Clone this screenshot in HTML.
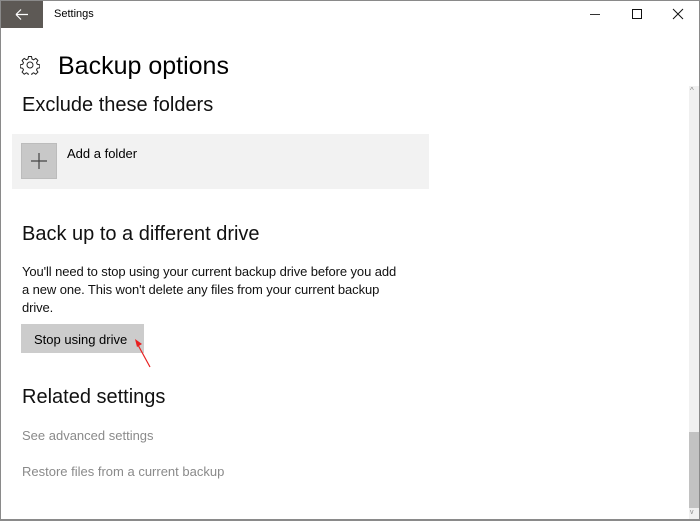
<!DOCTYPE html>
<html><head><meta charset="utf-8"><style>
*{margin:0;padding:0;box-sizing:border-box}
body{width:700px;height:521px;background:#fff;font-family:"Liberation Sans",sans-serif;color:#000;position:relative;overflow:hidden}
.frame{position:absolute;left:0;top:0;width:700px;height:521px;border:1px solid #8a8a8a;border-bottom:2px solid #8a8a8a}
.abs{position:absolute;white-space:nowrap}
.back{position:absolute;left:1px;top:1px;width:42px;height:27px;background:#5d5955}
.h1{font-size:25px;left:58px;top:52px}
.h2{font-size:20px;color:#111}
.body{font-size:13px;letter-spacing:-0.1px;line-height:18px;color:#111}
.link{font-size:13px;color:#8a8a8a}
</style></head><body>
<div class="back"><svg width="42" height="27"><path d="M15 13.5h12M15 13.5l5-5M15 13.5l5 5" stroke="#fff" stroke-width="1.2" fill="none"/></svg></div>
<div class="abs" style="left:54px;top:8px;font-size:11px">Settings</div>
<svg class="abs" style="left:590px;top:0" width="110" height="28">
<path d="M0 14.5h10" stroke="#333" stroke-width="1"/>
<rect x="42.5" y="9.5" width="9" height="9" stroke="#111" fill="none"/>
<path d="M83 9l10 10M93 9l-10 10" stroke="#111"/>
</svg>
<svg class="abs" style="left:20px;top:55px" width="20" height="20" viewBox="0 0 20 20">
<g fill="none" stroke="#222" stroke-width="1">
<path d="M8.5 1.5h3l.5 2.5 1.6.8 2.2-1.4 2.1 2.1-1.4 2.2.8 1.6 2.5.5v3l-2.5.5-.8 1.6 1.4 2.2-2.1 2.1-2.2-1.4-1.6.8-.5 2.5h-3l-.5-2.5-1.6-.8-2.2 1.4-2.1-2.1 1.4-2.2-.8-1.6-2.5-.5v-3l2.5-.5.8-1.6-1.4-2.2 2.1-2.1 2.2 1.4 1.6-.8z"/>
<circle cx="10" cy="10" r="3"/></g></svg>
<div class="abs h1">Backup options</div>
<div class="abs h2" style="left:22px;top:94px">Exclude these folders</div>
<div class="abs" style="left:12px;top:134px;width:417px;height:55px;background:#f2f2f2"></div>
<div class="abs" style="left:21px;top:143px;width:36px;height:36px;background:#c8c8c8;border:1px solid #bcbcbc"></div>
<svg class="abs" style="left:21px;top:143px" width="36" height="36"><path d="M18 10v16M10 18h16" stroke="#444" stroke-width="1.2"/></svg>
<div class="abs" style="left:67px;top:146px;font-size:13px">Add a folder</div>
<div class="abs h2" style="left:22px;top:223px">Back up to a different drive</div>
<div class="abs body" style="left:22px;top:263px">You'll need to stop using your current backup drive before you add<br>a new one. This won't delete any files from your current backup<br>drive.</div>
<div class="abs" style="left:21px;top:324px;width:123px;height:29px;background:#cccccc"></div>
<div class="abs" style="left:34px;top:332px;font-size:13px">Stop using drive</div>
<svg class="abs" style="left:130px;top:335px" width="25" height="35"><path d="M20 32L8 10" stroke="#e82020" stroke-width="1.2"/><path d="M5 4l7 5-5 3z" fill="#e82020"/></svg>
<div class="abs h2" style="left:22px;top:386px">Related settings</div>
<div class="abs link" style="left:22px;top:428px">See advanced settings</div>
<div class="abs link" style="left:22px;top:464px">Restore files from a current backup</div>
<div class="abs" style="left:689px;top:86px;width:10px;height:433px;background:#f0f0f0"></div>
<div class="abs" style="left:689px;top:432px;width:10px;height:76px;background:#c2c2c2"></div>
<div class="abs" style="left:690px;top:86px;font-size:8px;color:#888">^</div>
<div class="abs" style="left:690px;top:509px;font-size:7px;color:#888">v</div>
<div class="frame"></div>
</body></html>
